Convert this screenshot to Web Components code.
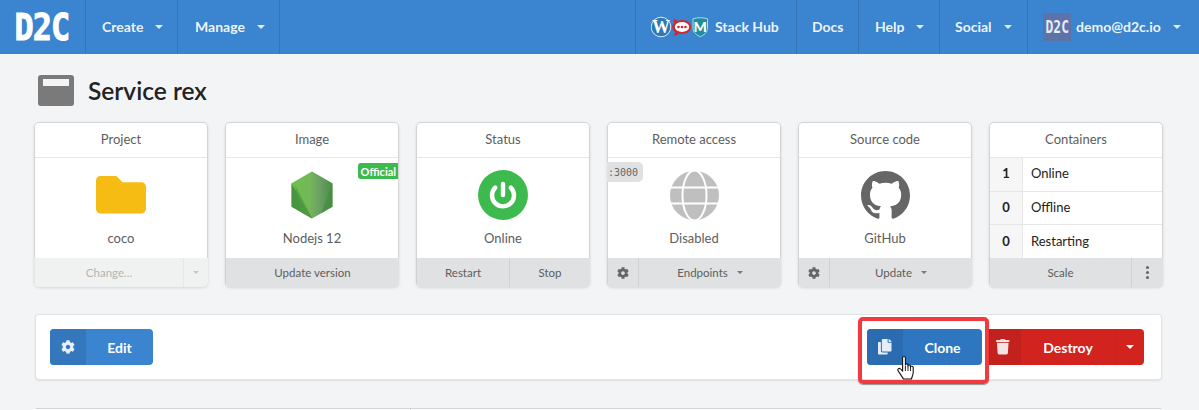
<!DOCTYPE html>
<html>
<head>
<meta charset="utf-8">
<title>Service rex</title>
<style>
  html, body { margin: 0; height: 410px; overflow: hidden; background: #f3f4f6; }
  body { font-family: Lato, "Open Sans", sans-serif; font-size: 13px; color: #222; }
</style>
</head>
<body>
<d2c-page>
  <app-navbar slot="nav">
    <nav-item slot="left" caret w="92" pad="16">Create</nav-item>
    <nav-item slot="left" caret w="102" pad="17">Manage</nav-item>
    <nav-item slot="right" edge w="162" pad="15">
      <stack-logos></stack-logos>Stack Hub
    </nav-item>
    <nav-item slot="right" w="62" pad="15">Docs</nav-item>
    <nav-item slot="right" caret w="81" pad="16">Help</nav-item>
    <nav-item slot="right" caret w="88" pad="15">Social</nav-item>
    <nav-item slot="right" caret w="171" pad="15" last>
      <d2c-logo mini></d2c-logo>demo@d2c.io
    </nav-item>
  </app-navbar>

  <page-title>Service rex</page-title>

  <card-row>
    <stat-card heading="Project">
      <card-figure label="coco"><app-icon name="folder" size="50" color="#f7bc14"></app-icon></card-figure>
      <foot-btn slot="foot" disabled grow>Change...</foot-btn>
      <foot-btn slot="foot" disabled w="25"><caret-mark light></caret-mark></foot-btn>
    </stat-card>

    <stat-card heading="Image">
      <corner-tag kind="official">Official</corner-tag>
      <card-figure label="Nodejs 12"><node-hex></node-hex></card-figure>
      <foot-btn slot="foot" grow>Update version</foot-btn>
    </stat-card>

    <stat-card heading="Status">
      <card-figure label="Online"><power-badge></power-badge></card-figure>
      <foot-btn slot="foot" w="93">Restart</foot-btn>
      <foot-btn slot="foot" grow>Stop</foot-btn>
    </stat-card>

    <stat-card heading="Remote access">
      <corner-tag kind="port">:3000</corner-tag>
      <card-figure label="Disabled"><globe-mark></globe-mark></card-figure>
      <foot-btn slot="foot" w="31"><app-icon name="cog" size="12" color="#666"></app-icon></foot-btn>
      <foot-btn slot="foot" grow>Endpoints<caret-mark gap></caret-mark></foot-btn>
    </stat-card>

    <stat-card heading="Source code">
      <card-figure label="GitHub"><app-icon name="github" size="49" color="#666"></app-icon></card-figure>
      <foot-btn slot="foot" w="31"><app-icon name="cog" size="12" color="#666"></app-icon></foot-btn>
      <foot-btn slot="foot" grow>Update<caret-mark gap></caret-mark></foot-btn>
    </stat-card>

    <stat-card heading="Containers" flush>
      <count-row n="1">Online</count-row>
      <count-row n="0">Offline</count-row>
      <count-row n="0" last>Restarting</count-row>
      <foot-btn slot="foot" grow>Scale</foot-btn>
      <foot-btn slot="foot" w="32"><dots-mark></dots-mark></foot-btn>
    </stat-card>
  </card-row>

  <action-panel>
    <action-btn slot="left" icon="cog" width="103">Edit</action-btn>
    <focus-wrap slot="right">
      <action-btn icon="copy" width="115" tone="clone">Clone</action-btn>
    </focus-wrap>
    <action-btn slot="right" icon="trash" width="159" tone="red" caret>Destroy</action-btn>
  </action-panel>

  <tab-strip></tab-strip>
</d2c-page>

<script>
const ICONS = {
  cog: ['0 0 512 512', 'M487.4 315.7l-42.6-24.6c4.3-23.2 4.3-47 0-70.2l42.6-24.6c4.9-2.8 7.1-8.6 5.5-14-11.1-35.6-30-67.8-54.7-94.6-3.8-4.1-10-5.1-14.8-2.3L380.8 110c-17.9-15.4-38.5-27.3-60.8-35.1V25.8c0-5.6-3.9-10.5-9.4-11.7-36.7-8.2-74.3-7.8-109.2 0-5.5 1.2-9.4 6.1-9.4 11.7V75c-22.2 7.9-42.8 19.8-60.8 35.1L88.7 85.5c-4.9-2.8-11-1.9-14.8 2.3-24.7 26.7-43.6 58.9-54.7 94.6-1.7 5.4.6 11.2 5.5 14L67.3 221c-4.3 23.2-4.3 47 0 70.2l-42.6 24.6c-4.9 2.8-7.1 8.6-5.5 14 11.1 35.6 30 67.8 54.7 94.6 3.8 4.1 10 5.1 14.8 2.3l42.6-24.6c17.9 15.4 38.5 27.3 60.8 35.1v49.2c0 5.6 3.9 10.5 9.4 11.7 36.7 8.2 74.3 7.8 109.2 0 5.5-1.2 9.4-6.1 9.4-11.7v-49.2c22.2-7.9 42.8-19.8 60.8-35.1l42.6 24.6c4.9 2.8 11 1.9 14.8-2.3 24.7-26.7 43.6-58.9 54.7-94.6 1.5-5.5-.7-11.3-5.6-14.1zM256 336c-44.1 0-80-35.9-80-80s35.9-80 80-80 80 35.9 80 80-35.9 80-80 80z'],
  folder: ['0 64 512 384', 'M464 128H272l-64-64H48C21.49 64 0 85.49 0 112v288c0 26.51 21.49 48 48 48h416c26.51 0 48-21.49 48-48V176c0-26.51-21.49-48-48-48z'],
  copy: ['0 0 448 512', 'M320 448v40c0 13.255-10.745 24-24 24H24c-13.255 0-24-10.745-24-24V120c0-13.255 10.745-24 24-24h72v296c0 30.879 25.121 56 56 56h168zm0-344V0H152c-13.255 0-24 10.745-24 24v368c0 13.255 10.745 24 24 24h272c13.255 0 24-10.745 24-24V128H344c-13.2 0-24-10.8-24-24zm120.971-31.029L375.029 7.029A24 24 0 0 0 358.059 0H352v96h96v-6.059a24 24 0 0 0-7.029-16.97z'],
  trash: ['0 0 448 512', 'M432 32H312l-9.4-18.7A24 24 0 0 0 281.1 0H166.8a23.72 23.72 0 0 0-21.4 13.3L136 32H16A16 16 0 0 0 0 48v32a16 16 0 0 0 16 16h416a16 16 0 0 0 16-16V48a16 16 0 0 0-16-16zM53.2 467a48 48 0 0 0 47.9 45h245.8a48 48 0 0 0 47.9-45L416 128H32z'],
  github: ['0 0 16 16', 'M8 0C3.58 0 0 3.58 0 8c0 3.54 2.29 6.53 5.47 7.59.4.07.55-.17.55-.38 0-.19-.01-.82-.01-1.49-2.01.37-2.53-.49-2.69-.94-.09-.23-.48-.94-.82-1.13-.28-.15-.68-.52-.01-.53.63-.01 1.08.58 1.23.82.72 1.21 1.87.87 2.33.66.07-.52.28-.87.51-1.07-1.78-.2-3.64-.89-3.64-3.95 0-.87.31-1.59.82-2.15-.08-.2-.36-1.02.08-2.12 0 0 .67-.21 2.2.82.64-.18 1.32-.27 2-.27.68 0 1.36.09 2 .27 1.53-1.04 2.2-.82 2.2-.82.44 1.1.16 1.92.08 2.12.51.56.82 1.27.82 2.15 0 3.07-1.87 3.75-3.65 3.95.29.25.54.73.54 1.48 0 1.07-.01 1.93-.01 2.2 0 .21.15.46.55.38A8.013 8.013 0 0016 8c0-4.42-3.58-8-8-8z']
};

// small base class, every element just fills its shadow root once
class Base extends HTMLElement {
  connectedCallback() {
    if (this.shadowRoot) return;
    this.attachShadow({ mode: 'open' });
    this.shadowRoot.innerHTML = this.render();
  }
}

class D2cPage extends Base {
  render() {
    return `
      <style>:host { display: block; }</style>
      <slot name="nav"></slot>
      <slot></slot>
    `;
  }
}

class AppNavbar extends Base {
  render() {
    return `
      <style>
        :host {
          display: flex;
          height: 54px;
          background: #3a84d0;
          color: rgba(255,255,255,.92);
          font-weight: 700;
          font-size: 14px;
        }
        .brand { width: 86px; padding-right: 1px; display: flex; align-items: center; justify-content: center; box-sizing: border-box; border-right: 1px solid #3474b8; }
        .left, .right { display: flex; }
        .right { margin-left: auto; }
      </style>
      <div class="brand"><d2c-logo></d2c-logo></div>
      <div class="left"><slot name="left"></slot></div>
      <div class="right"><slot name="right"></slot></div>
    `;
  }
}

class D2cLogo extends Base {
  render() {
    const mini = this.hasAttribute('mini');
    return `
      <style>
        :host {
          display: inline-flex;
          align-items: center;
          justify-content: center;
          flex: none;
          ${mini ? 'width: 28px; height: 28px; background: #5c72a8; margin: 1px 5px 0 0;' : 'width: 58px; height: 28px;'}
        }
        span {
          display: block;
          font-family: "DejaVu Sans Mono", monospace;
          font-weight: 700;
          color: ${mini ? '#e8ecf4' : '#fff'};
          font-size: ${mini ? '18px' : '37px'};
          line-height: 1;
          letter-spacing: ${mini ? '0' : '-1px'};
          transform: scaleX(${mini ? '.72' : '.86'});
          -webkit-text-stroke: ${mini ? '0' : '1px #fff'};
          white-space: nowrap;
        }
      </style>
      <span>D2C</span>
    `;
  }
}

class NavItem extends Base {
  render() {
    const caret = this.hasAttribute('caret');
    const last = this.hasAttribute('last');
    return `
      <style>
        :host {
          display: flex;
          align-items: center;
          flex: none;
          height: 54px;
          width: ${this.getAttribute('w')}px;
          box-sizing: border-box;
          padding: 0 0 1px ${this.getAttribute('pad')}px;
          ${last ? '' : 'border-right: 1px solid #3474b8;'}
          ${this.hasAttribute('edge') ? 'border-left: 1px solid #3474b8;' : ''}
          white-space: nowrap;
        }
        i {
          display: block;
          margin-left: 12px;
          width: 0;
          height: 0;
          border: 4px solid transparent;
          border-top-color: rgba(255,255,255,.85);
          border-bottom: 0;
        }
      </style>
      <slot></slot>${caret ? '<i></i>' : ''}
    `;
  }
}

class StackLogos extends Base {
  render() {
    return `
      <style>:host { display: inline-flex; margin: 1px 6px 0 0; } svg { display: block; }</style>
      <svg width="58" height="22" viewBox="0 0 58 22" role="img">
        <circle cx="10" cy="11" r="9.8" fill="#2f78b8" stroke="#dfeaf6" stroke-width="1"/>
        <text x="10" y="17" text-anchor="middle" font-family="Liberation Serif" font-weight="700" font-size="18" fill="#fff">W</text>
        <path d="M22.5 2.5l4.2 2.4c1.4-.6 2.8-.9 4.3-.9 5.1 0 9.2 3.1 9.2 7s-4.1 7-9.2 7c-1 0-2-.1-3-.4-1.4 1.3-3.4 2.4-5.6 2.4 1-1.1 1.8-2.6 1.7-4-1.7-1.2-2.9-2.9-2.9-5 0-1.6.8-3.1 2-4.3z" fill="#cf2a30"/>
        <ellipse cx="31" cy="11" rx="7.2" ry="5" fill="#fff"/>
        <circle cx="27.5" cy="11" r="1.3" fill="#cf2a30"/><circle cx="31" cy="11" r="1.3" fill="#cf2a30"/><circle cx="34.5" cy="11" r="1.3" fill="#cf2a30"/>
        <path d="M42 2.8c4.3-1.4 10-1.4 14.5 0v9.5c0 4.3-4 6.900-7.200 8.400-3.300-1.500-7.300-4.100-7.300-8.400z" fill="#1f8d9c" stroke="#a8e0e6" stroke-width="1"/>
        <text x="49.2" y="16" text-anchor="middle" font-family="Lato" font-weight="900" font-size="14" fill="#fff">M</text>
      </svg>
    `;
  }
}

class PageTitle extends Base {
  render() {
    return `
      <style>
        :host {
          display: flex;
          align-items: center;
          height: 68px;
          box-sizing: border-box;
          padding: 5px 0 0 38px;
          font-size: 24.5px;
          font-weight: 600;
          color: #222;
        }
        .ic { width: 36px; height: 31px; background: #7a7a7a; border-radius: 3px; margin-right: 14px; padding: 4px 5px 0; box-sizing: border-box; }
        .ic div { height: 7px; background: #f3f4f6; }
      </style>
      <div class="ic"><div></div></div>
      <slot></slot>
    `;
  }
}

class CardRow extends Base {
  render() {
    return `
      <style>
        :host {
          display: grid;
          grid-template-columns: repeat(6, 174px);
          column-gap: 17px;
          padding-left: 34px;
        }
      </style>
      <slot></slot>
    `;
  }
}

class StatCard extends Base {
  render() {
    return `
      <style>
        :host {
          display: flex;
          flex-direction: column;
          position: relative;
          height: 165px;
          box-sizing: border-box;
          background: #fff;
          border-radius: 5px;
          box-shadow: 0 0 0 1px #d4d4d5 inset, 0 1px 3px rgba(0,0,0,.12);
          overflow: hidden;
        }
        .head {
          height: 35px;
          flex: none;
          display: flex;
          align-items: center;
          justify-content: center;
          border-bottom: 1px solid #e6e6e7;
          color: #5d5d5d;
          font-size: 13px;
          margin: 1px 1px 0;
          padding-bottom: 2px;
          box-sizing: border-box;
        }
        .body { flex: 1; position: relative; margin: 0 1px; min-height: 0; display: flex; flex-direction: column; }
        .foot { flex: none; height: 29px; display: flex; background: #e0e1e2; }
      </style>
      <div class="head">${this.getAttribute('heading')}</div>
      <div class="body"><slot></slot></div>
      <div class="foot"><slot name="foot"></slot></div>
    `;
  }
}

class CardFigure extends Base {
  render() {
    return `
      <style>
        :host { display: flex; flex-direction: column; align-items: center; padding-top: 12px; color: #5d5d5d; font-size: 13px; }
        .ic { height: 50px; display: flex; align-items: center; justify-content: center; }
        .lb { margin-top: 10px; line-height: 17px; }
      </style>
      <div class="ic"><slot></slot></div>
      <div class="lb">${this.getAttribute('label')}</div>
    `;
  }
}

class AppIcon extends Base {
  render() {
    const [box, d] = ICONS[this.getAttribute('name')];
    const size = this.getAttribute('size');
    const color = this.getAttribute('color') || 'currentColor';
    return `
      <style>:host { display: inline-flex; } svg { display: block; }</style>
      <svg width="${size}" viewBox="${box}" fill="${color}"><path d="${d}"/></svg>
    `;
  }
}

class NodeHex extends Base {
  render() {
    return `
      <style>:host { display: inline-flex; } svg { display: block; }</style>
      <svg width="42" height="48" viewBox="0 0 42 48">
        <defs>
          <linearGradient id="n" x1="0" y1="0" x2="1" y2="0">
            <stop offset="0" stop-color="#6cc24a"/>
            <stop offset=".45" stop-color="#75b65a"/>
            <stop offset=".7" stop-color="#699f63"/>
            <stop offset="1" stop-color="#4a8f45"/>
          </linearGradient>
        </defs>
        <path d="M21 .5L41.5 12.2v23.6L21 47.5.5 35.8V12.2z" fill="url(#n)"/>
        <path d="M.5 12.2L21 47.5.5 35.8z" fill="#3f8a3c" opacity=".8"/>
        <path d="M41.5 12.2V35.8L30 42.5z" fill="#3f8a3c" opacity=".55"/>
        <path d="M4 14l17 33-12-7z" fill="#4f9b46" opacity=".7"/>
      </svg>
    `;
  }
}

class PowerBadge extends Base {
  render() {
    return `
      <style>:host { display: inline-flex; } svg { display: block; }</style>
      <svg width="50" height="50" viewBox="0 0 50 50">
        <circle cx="25" cy="25" r="25" fill="#3cba4e"/>
        <path d="M17.2 17.6a11 11 0 1 0 15.6 0" fill="none" stroke="#fff" stroke-width="4.4" stroke-linecap="round"/>
        <path d="M25 14v11" stroke="#fff" stroke-width="4.4" stroke-linecap="round"/>
      </svg>
    `;
  }
}

class GlobeMark extends Base {
  render() {
    return `
      <style>:host { display: inline-flex; } svg { display: block; }</style>
      <svg width="49" height="49" viewBox="0 0 49 49">
        <circle cx="24.5" cy="24.5" r="24.5" fill="#bfbfbf"/>
        <ellipse cx="24.5" cy="24.5" rx="12" ry="25" fill="none" stroke="#fff" stroke-width="2"/>
        <path d="M0 16.5h49M0 32.5h49" stroke="#fff" stroke-width="2"/>
      </svg>
    `;
  }
}

class CornerTag extends Base {
  render() {
    const official = this.getAttribute('kind') === 'official';
    return `
      <style>
        :host {
          position: absolute;
          top: ${official ? '5px' : '4px'};
          ${official ? 'right: 0;' : 'left: -1px;'}
          height: ${official ? '16px' : '20px'};
          display: flex;
          align-items: center;
          box-sizing: border-box;
          white-space: nowrap;
          ${official
            ? 'background: #3cba4e; color: #fff; font-weight: 700; font-size: 11px; padding: 0 2px 0 3px; border-radius: 3px 0 0 3px;'
            : 'background: #e0e1e2; color: #666; font-family: "DejaVu Sans Mono", monospace; font-size: 10px; padding: 0 5px 0 1px; border-radius: 0 5px 5px 0;'}
        }
      </style>
      <slot></slot>
    `;
  }
}

class FootBtn extends Base {
  render() {
    const w = this.getAttribute('w');
    const off = this.hasAttribute('disabled');
    return `
      <style>
        :host {
          display: flex;
          align-items: center;
          justify-content: center;
          box-sizing: border-box;
          ${w ? `flex: none; width: ${w}px;` : 'flex: 1;'}
          font-size: 11.5px;
          color: ${off ? '#b4b5b5' : '#5d5d5d'};
          background: ${off ? '#f0f1f1' : '#e0e1e2'};
          border-left: 1px solid transparent;
          white-space: nowrap;
        }
        :host(:not(:first-child)) { border-left: 1px solid ${off ? '#e6e7e7' : '#d0d1d2'}; }
      </style>
      <slot></slot>
    `;
  }
}

class CaretMark extends Base {
  render() {
    return `
      <style>
        :host {
          display: inline-block;
          width: 0;
          height: 0;
          border: 3px solid transparent;
          border-top: 3px solid ${this.hasAttribute('light') ? '#c4c5c5' : '#7a7a7a'};
          border-bottom: 0;
          ${this.hasAttribute('gap') ? 'margin-left: 9px;' : ''}
        }
      </style>
    `;
  }
}

class DotsMark extends Base {
  render() {
    return `
      <style>
        :host { display: flex; flex-direction: column; gap: 2px; }
        i { display: block; width: 3px; height: 3px; border-radius: 50%; background: #666; }
      </style>
      <i></i><i></i><i></i>
    `;
  }
}

class CountRow extends Base {
  render() {
    const last = this.hasAttribute('last');
    return `
      <style>
        :host {
          display: flex;
          flex: 1;
          font-size: 13px;
          color: #222;
          ${last ? '' : 'border-bottom: 1px solid #e6e6e7;'}
        }
        .n { width: 33px; flex: none; display: flex; align-items: center; justify-content: center; padding-bottom: 2px; box-sizing: border-box; background: #f6f6f6; border-right: 1px solid #e6e6e7; font-weight: 700; }
        .t { display: flex; align-items: center; padding: 0 0 2px 8px; }
      </style>
      <div class="n">${this.getAttribute('n')}</div>
      <div class="t"><slot></slot></div>
    `;
  }
}

class ActionPanel extends Base {
  render() {
    return `
      <style>
        :host {
          display: flex;
          justify-content: space-between;
          align-items: flex-start;
          height: 64px;
          box-sizing: border-box;
          margin: 28px 38px 0 36px;
          padding: 14px 17px 0 14px;
          background: #fff;
          border-radius: 3px;
          box-shadow: 0 0 0 1px #e2e3e4, 0 1px 3px rgba(0,0,0,.18);
        }
        div { display: flex; gap: 3px; align-items: center; }
      </style>
      <div><slot name="left"></slot></div>
      <div><slot name="right"></slot></div>
    `;
  }
}

class ActionBtn extends Base {
  render() {
    const tone = this.getAttribute('tone');
    const name = this.getAttribute('icon');
    const palette = {
      clone: ['#2f76c0', '#2b6cb0'],
      red: ['#d3231f', '#c2211e']
    }[tone] || ['#3a84d0', '#3577bc'];
    const caret = this.hasAttribute('caret');
    return `
      <style>
        :host {
          display: flex;
          height: 36px;
          width: ${this.getAttribute('width')}px;
          border-radius: 4px;
          overflow: hidden;
          color: #fff;
          font-weight: 700;
          font-size: 14px;
          background: ${palette[0]};
        }
        .ic { width: 36px; flex: none; display: flex; align-items: center; justify-content: center; background: ${palette[1]}; }
        .ic svg { display: block; fill: rgba(255,255,255,.88); }
        .tx { flex: 1; display: flex; align-items: center; justify-content: center; }
        .cr { width: 29px; flex: none; display: flex; align-items: center; justify-content: center; border-left: 1px solid #c8221e; box-sizing: border-box; }
        .cr i { display: block; width: 0; height: 0; border: 4px solid transparent; border-top-color: #fff; border-bottom: 0; }
      </style>
      <div class="ic"><svg width="${name === 'cog' ? 14 : 13.5}" viewBox="${ICONS[name][0]}"><path d="${ICONS[name][1]}"/></svg></div>
      <div class="tx"><slot></slot></div>
      ${caret ? '<div class="cr"><i></i></div>' : ''}
    `;
  }
}

// red marker box and mouse pointer that sit over the clone button
class FocusWrap extends Base {
  render() {
    return `
      <style>
        :host { display: block; position: relative; }
        .ring {
          position: absolute;
          left: -9px; right: -7px; top: -12px; bottom: -19px;
          border: 4px solid #ef3a3f;
          border-radius: 5px;
          box-shadow: 0 1px 1px rgba(0,0,0,.4);
          z-index: 2;
          pointer-events: none;
        }
        svg { position: absolute; left: 30px; top: 26px; z-index: 3; display: block; }
      </style>
      <slot></slot>
      <div class="ring"></div>
      <svg width="18" height="25" viewBox="0 0 18 25">
        <path d="M5.6 3C5.6 .9 8.4 .9 8.4 3V10C8.4 8.5 11 8.5 11 10.2V11C11 9.6 13.5 9.7 13.5 11.3V12C13.5 10.8 16.2 10.9 16.2 12.6V17.5C16.2 20 15 21.5 14.4 24H6.4C5.2 21.2 2 17.6 1 15.6 .2 13.8 2.2 12.6 3.5 14L5.6 16.2Z" fill="#fff" stroke="#111" stroke-width="1.1" stroke-linejoin="round"/>
        <path d="M8.4 11v5M11 11v5M13.5 12v4" stroke="#111" stroke-width=".9" fill="none"/>
      </svg>
    `;
  }
}

class TabStrip extends Base {
  render() {
    return `
      <style>
        :host {
          display: flex;
          height: 1px;
          margin: 30px 38px 0 36px;
          background: #fff;
          box-shadow: 0 -1px 0 0 #d4d4d5;
        }
        div { width: 374px; height: 100%; border-right: 1px solid #d4d4d5; }
      </style>
      <div></div>
    `;
  }
}

customElements.define('d2c-page', D2cPage);
customElements.define('app-navbar', AppNavbar);
customElements.define('d2c-logo', D2cLogo);
customElements.define('nav-item', NavItem);
customElements.define('stack-logos', StackLogos);
customElements.define('page-title', PageTitle);
customElements.define('card-row', CardRow);
customElements.define('stat-card', StatCard);
customElements.define('card-figure', CardFigure);
customElements.define('app-icon', AppIcon);
customElements.define('node-hex', NodeHex);
customElements.define('power-badge', PowerBadge);
customElements.define('globe-mark', GlobeMark);
customElements.define('corner-tag', CornerTag);
customElements.define('foot-btn', FootBtn);
customElements.define('caret-mark', CaretMark);
customElements.define('dots-mark', DotsMark);
customElements.define('count-row', CountRow);
customElements.define('action-panel', ActionPanel);
customElements.define('action-btn', ActionBtn);
customElements.define('focus-wrap', FocusWrap);
customElements.define('tab-strip', TabStrip);
</script>
</body>
</html>
